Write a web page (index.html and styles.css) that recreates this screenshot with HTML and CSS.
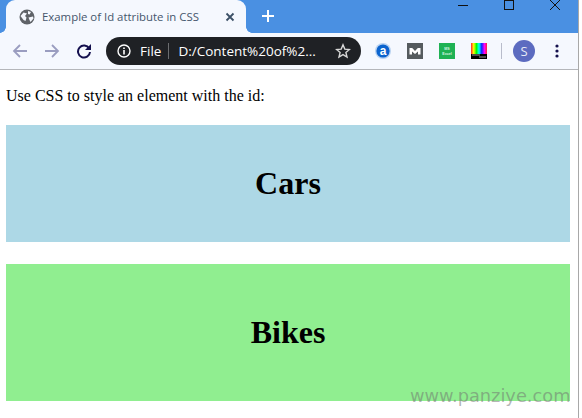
FILE: index.html
```html
<!DOCTYPE html>
<html lang="en">
<head>
<meta charset="utf-8">
<title>Example of Id attribute in CSS</title>
<link rel="stylesheet" href="styles.css">
</head>
<body>
<div class="window">
  <header class="tabstrip">
    <div class="tab">
      <svg class="globe" viewBox="0 0 16 16" width="16" height="16"><circle cx="8" cy="8" r="7.5" fill="#5f6368"/><path d="M1.500 7l3-3.500 3.500 1-2 2.500 1.500 1.500-1 3.500-2-1zM9 2l3 1-1.500 2.500L9 5zM9.500 8.500l4.500-1 .5 2-3 3.500-1-2z" fill="#f5f8fe"/></svg>
      <span class="tab-title">Example of Id attribute in CSS</span>
      <svg class="tab-close" viewBox="0 0 10 10" width="10" height="10"><path d="M1.500 1.500l7 7M8.500 1.500l-7 7" stroke="#3c5066" stroke-width="1.800" fill="none"/></svg>
    </div>
    <svg class="newtab" viewBox="0 0 12 12" width="12" height="12"><path d="M6 0v12M0 6h12" stroke="#fff" stroke-width="2" fill="none"/></svg>
    <div class="caption">
      <svg viewBox="0 0 12 12" width="12" height="12"><path d="M1 5.500h10" stroke="#111" fill="none"/></svg>
      <svg viewBox="0 0 12 12" width="12" height="12"><rect x="1.500" y="0.500" width="9" height="9" stroke="#111" fill="none"/></svg>
      <svg viewBox="0 0 12 12" width="12" height="12"><path d="M1 0l10 10M11 0L1 10" stroke="#111" fill="none"/></svg>
    </div>
  </header>
  <nav class="toolbar">
    <svg class="nav-btn" viewBox="0 0 16 16" width="16" height="16"><path d="M15 8H2M8 2L2 8l6 6" stroke="#9a9dc0" stroke-width="1.800" fill="none"/></svg>
    <svg class="nav-btn" viewBox="0 0 16 16" width="16" height="16"><path d="M1 8h13M8 2l6 6-6 6" stroke="#9a9dc0" stroke-width="1.800" fill="none"/></svg>
    <svg class="nav-btn" viewBox="0 0 16 16" width="16" height="16"><path d="M13.200 5.500A6 6 0 1 0 14 9" stroke="#14104e" stroke-width="2" fill="none"/><path d="M15 1v6H9z" fill="#14104e"/></svg>
    <div class="omnibox">
      <svg viewBox="0 0 14 14" width="14" height="14"><circle cx="7" cy="7" r="6" stroke="#fff" stroke-width="1.400" fill="none"/><path d="M7 6v4.400M7 3.400v1.500" stroke="#fff" stroke-width="1.600"/></svg>
      <span class="scheme">File</span>
      <span class="sep"></span>
      <span class="url">D:/Content%20of%2...</span>
      <svg class="star" viewBox="0 0 16 16" width="16" height="16"><path d="M8 1.800l1.800 4.300 4.600.4-3.500 3 1.100 4.500-4-2.400-4 2.400 1.100-4.500-3.500-3 4.600-.4z" stroke="#d8d8d8" stroke-width="1.400" fill="none"/></svg>
    </div>
    <div class="extensions">
      <svg viewBox="0 0 16 16" width="16" height="16"><circle cx="8" cy="8" r="8" fill="#b9d2f0"/><circle cx="8" cy="8" r="6.600" fill="#0b63ce"/><text x="8" y="12" text-anchor="middle" class="ext-a">a</text></svg>
      <svg viewBox="0 0 16 16" width="16" height="16"><rect width="16" height="16" fill="#555b5e"/><path d="M2.500 11.500V5h2.700L8 8l2.800-3h2.700v6.500h-2.500V8.500L8 11 5 8.500v3z" fill="#fff"/></svg>
      <svg viewBox="0 0 16 16" width="16" height="16"><rect width="16" height="16" fill="#1fb254"/><text x="8" y="6.500" text-anchor="middle" class="ext-ms">MS</text><text x="8" y="11.500" text-anchor="middle" class="ext-ms">Excel</text></svg>
      <svg viewBox="0 0 16 16" width="16" height="16"><defs><linearGradient id="bars"><stop offset="0" stop-color="#ff2030"/><stop offset=".17" stop-color="#ffff00"/><stop offset=".34" stop-color="#00ff00"/><stop offset=".5" stop-color="#00ffff"/><stop offset=".67" stop-color="#1020ff"/><stop offset=".84" stop-color="#ff00ff"/><stop offset="1" stop-color="#ff2030"/></linearGradient></defs><rect width="16" height="16" fill="#000"/><rect width="16" height="11" fill="url(#bars)"/><rect x="1" y="11.500" width="8" height="1" fill="#999"/><rect x="8" y="13.500" width="7" height="1" fill="#999"/></svg>
    </div>
    <span class="toolbar-sep"></span>
    <span class="avatar">S</span>
    <svg class="menu" viewBox="0 0 4 14" width="4" height="14"><circle cx="2" cy="2" r="1.600" fill="#14104e"/><circle cx="2" cy="7" r="1.600" fill="#14104e"/><circle cx="2" cy="12" r="1.600" fill="#14104e"/></svg>
  </nav>
  <main class="page">
    <p class="intro">Use CSS to style an element with the id:</p>
    <section class="panel cars"><h1>Cars</h1></section>
    <section class="panel bikes"><h1>Bikes</h1></section>
  </main>
</div>
<div class="watermark">www.panziye.com</div>
</body>
</html>
```
FILE: styles.css
```css
* { box-sizing: border-box; }
html, body { margin: 0; height: 100%; background: #fff; overflow: hidden; }
body { position: relative; }

.window {
  width: 579px;
  height: 418px;
  border-right: 1px solid #a8a8a8;
  display: flex;
  flex-direction: column;
}

.tabstrip {
  height: 33px;
  flex: none;
  background: #4a90e2;
  display: flex;
  align-items: flex-start;
  padding-left: 6px;
}
.tab {
  position: relative;
  width: 240px;
  height: 33px;
  background: #f5f8fe;
  border-radius: 9px 9px 0 0;
  display: flex;
  align-items: center;
  padding: 0 11px 0 13px;
  font: 11.4px "Open Sans", "Noto Sans", sans-serif;
  color: #45566c;
}
.tab::before, .tab::after {
  content: "";
  position: absolute;
  bottom: 0;
  width: 6px;
  height: 6px;
}
.tab::before { left: -6px; background: radial-gradient(circle at 0 0, #4a90e2 5.5px, #f5f8fe 6px); }
.tab::after { right: -6px; background: radial-gradient(circle at 100% 0, #4a90e2 5.5px, #f5f8fe 6px); }
.globe { flex: none; margin-right: 7px; }
.tab-title { flex: 1; white-space: nowrap; overflow: hidden; }
.tab-close { flex: none; }
.newtab { margin: 10px 0 0 16px; flex: none; }
.caption {
  margin-left: auto;
  display: flex;
  gap: 34px;
  padding-right: 17px;
}

.toolbar {
  height: 37px;
  flex: none;
  background: #f5f8fe;
  border-bottom: 1px solid #b4b6ba;
  display: flex;
  align-items: center;
  padding-left: 12px;
}
.nav-btn { flex: none; margin-right: 16px; }
.omnibox {
  width: 255px;
  height: 28px;
  margin-left: -2px;
  background: #1f2125;
  border-radius: 14px;
  display: flex;
  align-items: center;
  padding: 0 10px 0 11px;
  color: #fff;
  font: 13.5px "Open Sans", "Noto Sans", sans-serif;
  white-space: nowrap;
}
.scheme { margin-left: 9px; }
.sep { width: 1px; height: 16px; background: #6b6d70; margin: 0 9px 0 7px; }
.url { flex: 1; overflow: hidden; }
.star { flex: none; }
.extensions {
  display: flex;
  gap: 16px;
  margin-left: 14px;
}
.ext-a { font: bold 12px "Liberation Sans", sans-serif; fill: #fff; }
.ext-ms { font: bold 3.600px "Liberation Sans", sans-serif; fill: #d8f5e2; }
.toolbar-sep { width: 1px; height: 16px; background: #b8bccb; margin: 0 11px 0 14px; }
.avatar {
  width: 22px;
  height: 22px;
  flex: none;
  border-radius: 50%;
  background: #5c6bc0;
  color: #e8eaf6;
  font: 13px/22px "Open Sans", sans-serif;
  text-align: center;
}
.menu { flex: none; margin-left: 20px; }

.page {
  flex: 1;
  padding: 0 8px 0 6px;
  font-family: "Liberation Serif", "Times New Roman", serif;
  color: #000;
}
.intro { margin: 16px 0 20px; font-size: 16px; line-height: 19px; }
.panel {
  display: flex;
  align-items: center;
  justify-content: center;
}
.panel h1 { margin: 0; font-size: 32px; font-weight: bold; line-height: 37px; }
.cars { height: 117px; background: #add8e6; margin-bottom: 22px; }
.bikes { height: 137px; background: #90ee90; }

.watermark {
  position: absolute;
  left: 410px;
  top: 385px;
  font: 17.8px "DejaVu Sans", sans-serif;
  color: rgba(110, 110, 110, 0.5);
  white-space: nowrap;
}
```
